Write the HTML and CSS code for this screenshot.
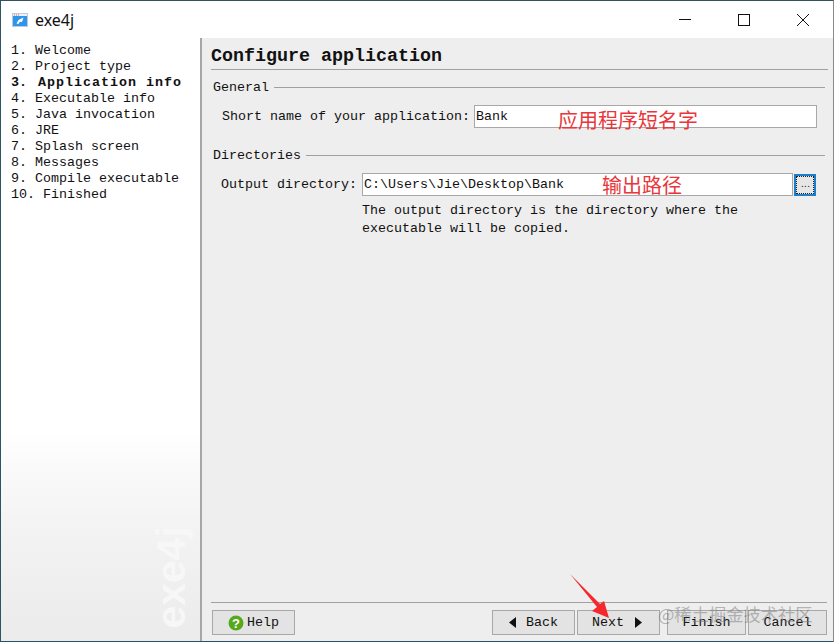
FILE: index.html
```html
<!DOCTYPE html>
<html lang="en">
<head>
<meta charset="utf-8">
<title>exe4j</title>
<link rel="stylesheet" href="styles.css">
</head>
<body>
<div class="window">
  <header class="titlebar">
    <svg class="app-icon" width="16" height="16" viewBox="0 0 16 16">
      <rect x="0.5" y="1.5" width="15" height="13" fill="#2f95e8" stroke="#b5cde6"/>
      <rect x="1" y="2" width="14" height="2" fill="#eef2f7"/>
      <path d="M2 3H3M4 3H5M6 3H7" stroke="#d0606a" fill="none"/>
      <path d="M4.5 11.5 L6.5 8 L11.5 5.5 L10 10 L7.8 9.8 L6.5 12 Z" fill="#fff"/>
    </svg>
    <span class="app-title">exe4j</span>
    <div class="win-controls">
      <span class="win-btn"><svg width="12" height="12" viewBox="0 0 12 12"><path d="M0 5.5H12" stroke="#111" fill="none"/></svg></span>
      <span class="win-btn"><svg width="12" height="12" viewBox="0 0 12 12"><rect x="0.5" y="0.5" width="11" height="11" stroke="#111" fill="none"/></svg></span>
      <span class="win-btn"><svg width="12" height="12" viewBox="0 0 12 12"><path d="M0 0L12 12M12 0L0 12" stroke="#111" fill="none"/></svg></span>
    </div>
  </header>
  <div class="content">
    <nav class="sidebar">
      <div class="step">1. Welcome</div>
      <div class="step">2. Project type</div>
      <div class="step current"><span>3.</span> <b class="current-name">Application info</b></div>
      <div class="step">4. Executable info</div>
      <div class="step">5. Java invocation</div>
      <div class="step">6. JRE</div>
      <div class="step">7. Splash screen</div>
      <div class="step">8. Messages</div>
      <div class="step">9. Compile executable</div>
      <div class="step">10. Finished</div>
      <div class="brand">exe4j</div>
    </nav>
    <main class="main">
      <h1 class="page-title">Configure application</h1>
      <section class="group group-general">
        <div class="group-head"><span>General</span><i class="rule"></i></div>
        <div class="row row-name">
          <label class="label">Short name of your application:</label>
          <div class="input input-name">Bank</div>
        </div>
      </section>
      <section class="group group-dirs">
        <div class="group-head"><span>Directories</span><i class="rule"></i></div>
        <div class="row row-dir">
          <label class="label">Output directory:</label>
          <div class="input input-dir">C:\Users\Jie\Desktop\Bank</div>
          <button class="browse"><span>...</span></button>
        </div>
        <p class="hint">The output directory is the directory where the<br>executable will be copied.</p>
      </section>
      <footer class="footer">
        <button class="btn btn-help">
          <svg width="16" height="16" viewBox="0 0 16 16"><circle cx="8" cy="8" r="7.5" fill="#58a81e"/><text x="8" y="12.5" class="help-mark" text-anchor="middle">?</text></svg>
          Help
        </button>
        <div class="nav-btns">
          <button class="btn btn-back"><svg width="8" height="12" viewBox="0 0 8 12"><path d="M7 0V11L0 5.5Z" fill="#111"/></svg> Back</button>
          <button class="btn btn-next">Next <svg width="8" height="12" viewBox="0 0 8 12"><path d="M0 0V11L7 5.5Z" fill="#111"/></svg></button>
          <button class="btn btn-finish">Finish</button>
          <button class="btn btn-cancel">Cancel</button>
        </div>
      </footer>
    </main>
  </div>
  <span class="note note-name">应用程序短名字</span>
  <span class="note note-dir">输出路径</span>
  <svg class="arrow" width="44" height="50" viewBox="0 0 44 50"><path d="M1 1 L31 31 L35 28 L40 45 L23 38 L28 34 Z" fill="#f5282d"/></svg>
  <span class="watermark">@稀土掘金技术社区</span>
</div>
</body>
</html>
```
FILE: styles.css
```css
* { box-sizing: border-box; }
html, body { margin: 0; padding: 0; }
body { width: 834px; height: 642px; overflow: hidden; background: #fff; }

.window {
  position: relative;
  width: 834px;
  height: 642px;
  display: flex;
  flex-direction: column;
  background: #fff;
  border-top: 1px solid #34505c;
  border-left: 1px solid #2c5566;
  border-right: 1px solid #8a8a8a;
  border-bottom: 1px solid #27536a;
  font: 13.33px/16px "Liberation Mono", "Noto Sans CJK SC", monospace;
  color: #111;
  overflow: hidden;
}

.titlebar {
  height: 37px;
  display: flex;
  align-items: center;
  padding-left: 11px;
  flex: none;
}
.app-icon { margin-right: 7px; }
.app-title { font: 16px "Noto Sans", "Liberation Sans", sans-serif; color: #111; }
.win-controls { margin-left: auto; display: flex; padding-right: 1px; }
.win-btn { width: 58px; height: 37px; display: flex; align-items: center; justify-content: center; }
.win-btn:nth-child(2) { width: 60px; }

.content { flex: 1; display: flex; min-height: 0; }

.sidebar {
  position: relative;
  width: 199px;
  flex: none;
  padding: 5px 0 0 10px;
  background: linear-gradient(180deg, #fff 0, #fff 390px, #f3f3f3 490px, #ebebeb 603px);
  overflow: hidden;
}
.step { height: 16px; white-space: pre; }
.step.current { font-weight: bold; }
.step.current span { margin-right: 3px; }
.current-name { letter-spacing: 1px; }
.brand {
  position: absolute;
  right: 7px;
  bottom: 12px;
  writing-mode: vertical-rl;
  transform: rotate(180deg);
  font: bold 41px/44px "Liberation Sans", sans-serif;
  color: #f7f7f7;
}

.main {
  flex: 1;
  min-width: 0;
  display: flex;
  flex-direction: column;
  background: #eeeeee;
  border-left: 2px solid #a6a6a6;
  padding: 0 6px 0 9px;
}
.page-title {
  margin: 0 -1px 0 0;
  height: 32px;
  font: bold 18.33px/38px "Liberation Mono", monospace;
  color: #111;
  border-bottom: 1px solid #a0a0a0;
}
.group-head { display: flex; align-items: center; margin-left: 2px; height: 16px; }
.group-head span { padding-top: 2px; }
.group-head .rule { flex: 1; height: 1px; background: #a0a0a0; margin: 0 2px 0 5px; }
.group-general { margin-top: 9px; }
.group-dirs { margin-top: 19px; }

.row { display: flex; align-items: center; }
.row-name { margin: 10px 0 0 11px; }
.row-dir { margin: 10px 0 0 10px; }
.label { white-space: pre; }
.input {
  height: 23px;
  background: #fff;
  border: 1px solid #a8a8a8;
  line-height: 21px;
  padding-left: 1px;
  white-space: pre;
}
.input-name { width: 343px; margin-left: 4px; }
.input-dir { width: 431px; margin-left: 5px; }
.browse {
  width: 22px;
  height: 22px;
  margin-left: 1px;
  padding: 0;
  border: 2px solid #1f7ec9;
  outline: 1px dotted #222;
  outline-offset: -3px;
  background: #e6e6e6;
  font: bold 7px/12px "Liberation Mono", monospace;
  letter-spacing: -1px;
  color: #111;
}
.hint { margin: 6px 0 0 151px; font: inherit; line-height: 18px; }

.footer {
  margin-top: auto;
  height: 39px;
  display: flex;
  justify-content: space-between;
  align-items: flex-start;
  border-top: 1px solid #a0a0a0;
  padding: 7px 0 0 1px;
}
.nav-btns { display: flex; }
.btn {
  height: 25px;
  width: 83px;
  padding: 0;
  display: flex;
  align-items: center;
  justify-content: center;
  gap: 9px;
  background: #e3e3e3;
  border: 1px solid #a8a8a8;
  font: 13.33px/16px "Liberation Mono", monospace;
  color: #111;
}
.btn-help { gap: 3px; }
.help-mark { font: bold 13px "Liberation Sans", sans-serif; fill: #fff; }
.btn-back { margin-right: 2px; }
.btn-next { margin-right: 7px; gap: 11px; padding-right: 2px; }
.btn-finish { margin-right: 2px; width: 79px; }
.btn-cancel { width: 79px; }

.note {
  position: absolute;
  font: 20px/24px "Noto Sans CJK SC", sans-serif;
  color: #e8363a;
  white-space: nowrap;
}
.note-name { left: 557px; top: 107px; }
.note-dir { left: 601px; top: 172px; }
.arrow { position: absolute; left: 568px; top: 572px; }
.watermark {
  position: absolute;
  left: 657px;
  top: 601px;
  font: 17.3px/24px "Noto Sans CJK SC", sans-serif;
  color: rgba(120,120,120,0.5);
  white-space: nowrap;
}
```
